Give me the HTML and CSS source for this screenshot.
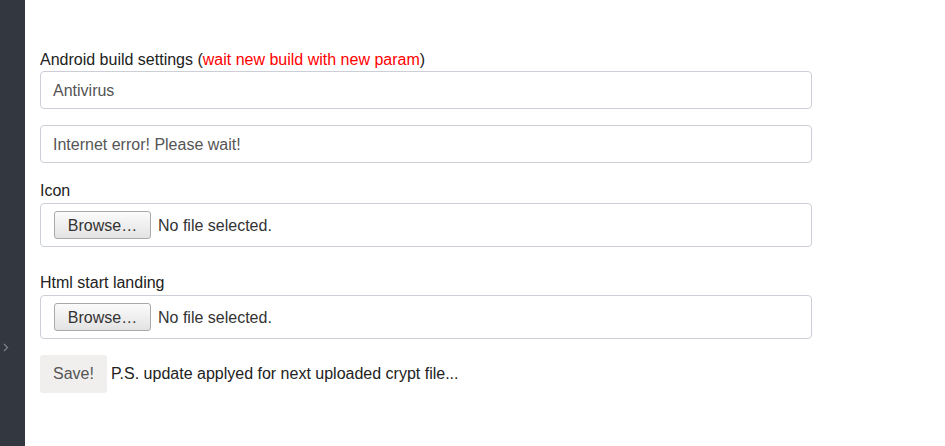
FILE: index.html
```html
<!DOCTYPE html>
<html>
<head>
<meta charset="utf-8">
<link rel="stylesheet" href="styles.css">
</head>
<body>
<div class="layout">
  <aside class="sidebar">
    <svg class="chev" width="6" height="9" viewBox="0 0 6 9"><path d="M1 1 L4.5 4.5 L1 8" fill="none" stroke="#7a7f88" stroke-width="1.3"/></svg>
  </aside>
  <main class="content">
    <form class="form">
      <label class="label">Android build settings (<span class="red">wait new build with new param</span>)</label>
      <div class="input">Antivirus</div>
      <div class="input gap-top">Internet error! Please wait!</div>
      <label class="label icon-label">Icon</label>
      <div class="filebox"><span class="browse">Browse…</span><span class="nofile">No file selected.</span></div>
      <label class="label html-label">Html start landing</label>
      <div class="filebox"><span class="browse">Browse…</span><span class="nofile">No file selected.</span></div>
      <div class="save-row"><span class="save">Save!</span><span class="ps">P.S. update applyed for next uploaded crypt file...</span></div>
    </form>
  </main>
</div>
</body>
</html>
```
FILE: styles.css
```css
html, body { margin: 0; padding: 0; background: #fff; }
body { font-family: "Liberation Sans", Arial, sans-serif; font-size: 16px; color: #222; }
.layout { display: flex; height: 446px; }
.sidebar { width: 25px; background: #33373f; position: relative; flex: none; }
.chev { position: absolute; left: 3px; top: 343px; }
.content { flex: 1; padding: 0 15px; }
.form { width: 772px; display: flex; flex-direction: column; padding-top: 50px; }
.label { display: block; line-height: 20px; margin-bottom: 1px; color: #222; }
.red { color: #f00; }
.input { height: 36px; border: 1px solid #ccd0d6; border-radius: 4px; padding: 0 12px; line-height: 37px; color: #555; }
.gap-top { margin-top: 16px; }
.icon-label { margin-top: 18px; margin-bottom: 2px; }
.html-label { margin-top: 26px; margin-bottom: 2px; }
.filebox { height: 42px; border: 1px solid #ccd0d6; border-radius: 4px; padding: 0 13px; display: flex; align-items: center; color: #555; }
.browse { box-sizing: border-box; width: 97px; height: 28px; padding-top: 2px; border: 1px solid #a9a9a9; border-radius: 3px; background: linear-gradient(#fbfbfb, #e3e3e3); display: flex; align-items: center; justify-content: center; color: #333; margin-right: 7px; }
.nofile { color: #333; padding-top: 2px; }
.save-row { display: flex; align-items: center; margin-top: 16px; }
.save { width: 67px; height: 38px; background: #f0efed; border-radius: 3px; color: #555; display: flex; align-items: center; justify-content: center; margin-right: 4px; }
.ps { color: #222; }
```
